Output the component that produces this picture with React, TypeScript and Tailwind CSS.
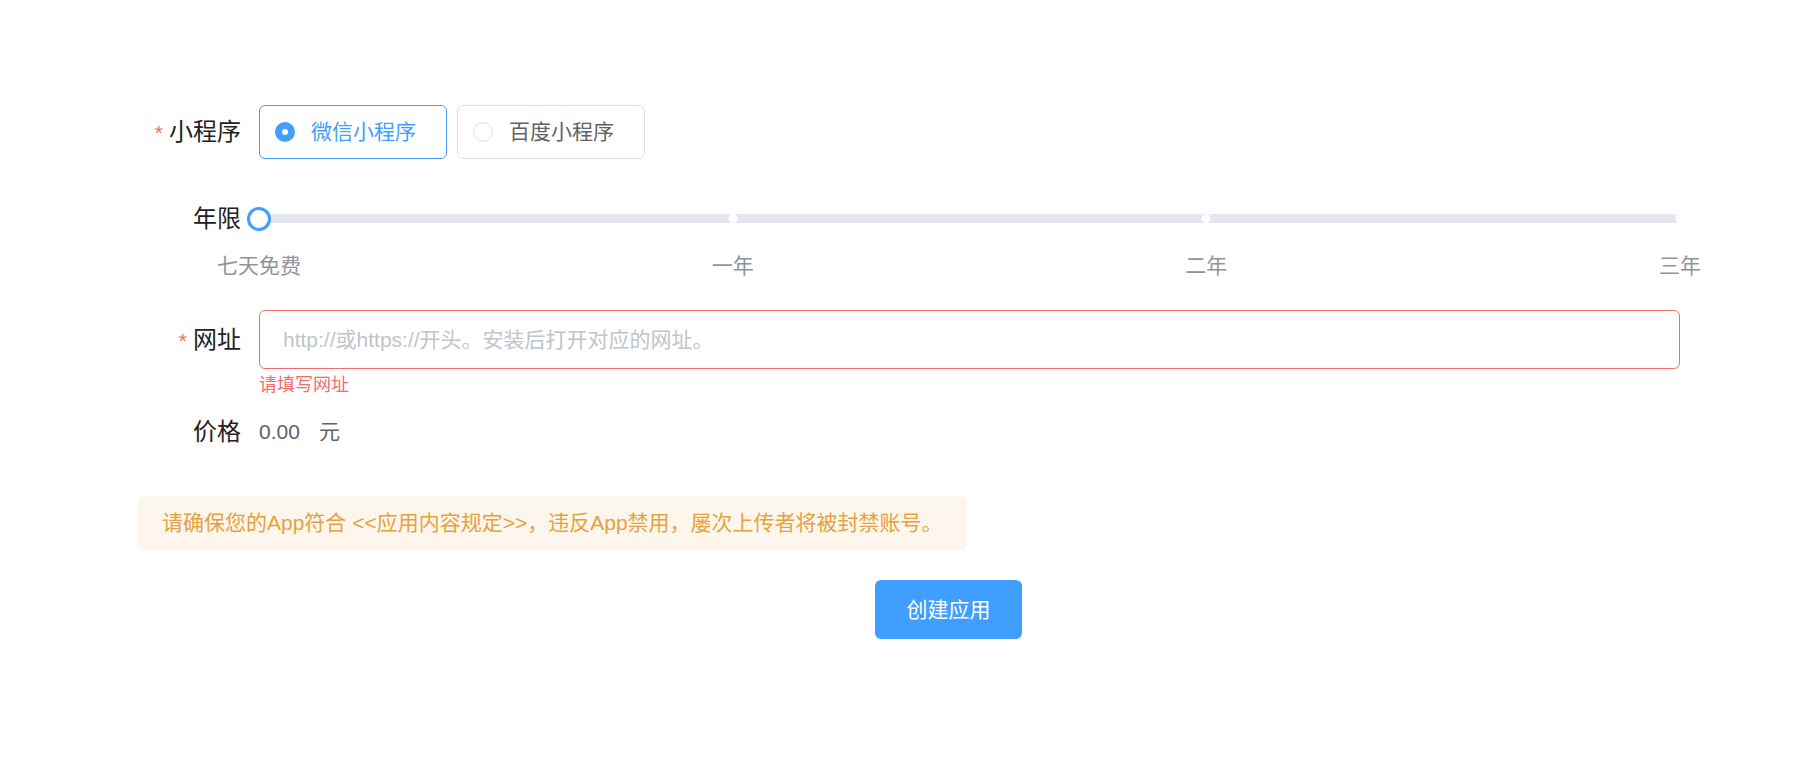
import React from "react";

const FONT = "font-['Liberation_Sans','Noto_Sans_CJK_SC',sans-serif]";

function Label({ text, required, h }: { text: string; required?: boolean; h: string }) {
  return (
    <div className={`w-[121px] shrink-0 pr-[18px] text-right text-[24px] text-[#222] ${h}`}>
      {required && <span className="mr-[6px] text-[21px] text-[#f56c6c]">*</span>}
      {text}
    </div>
  );
}

function Radio({ label, checked }: { label: string; checked?: boolean }) {
  return (
    <div
      className={`flex h-[54px] w-[188px] items-center rounded-[6px] border pl-[15px] ${
        checked ? "border-[#409eff]" : "border-[#dcdfe6]"
      }`}
    >
      {checked ? (
        <span className="flex h-[20px] w-[20px] items-center justify-center rounded-full bg-[#409eff]">
          <span className="h-[6px] w-[6px] rounded-full bg-white" />
        </span>
      ) : (
        <span className="h-[20px] w-[20px] rounded-full border border-[#dcdfe6] bg-white" />
      )}
      <span className={`ml-[16px] text-[21px] ${checked ? "text-[#409eff]" : "text-[#606266]"}`}>{label}</span>
    </div>
  );
}

const marks = [
  { pos: "left-0", text: "七天免费" },
  { pos: "left-1/3", text: "一年" },
  { pos: "left-2/3", text: "二年" },
  { pos: "left-full", text: "三年" },
];

function Slider() {
  return (
    <div className="relative h-[84px] flex-1">
      <div className="absolute left-0 right-0 top-[21px] h-[9px] rounded-[5px] bg-[#e4e7ed]" />
      {/* stops */}
      <span className="absolute left-1/3 top-[21px] h-[9px] w-[9px] -translate-x-1/2 rounded-full bg-white" />
      <span className="absolute left-2/3 top-[21px] h-[9px] w-[9px] -translate-x-1/2 rounded-full bg-white" />
      <span className="absolute left-full top-[21px] h-[9px] w-[9px] -translate-x-1/2 rounded-full bg-white" />
      {/* thumb */}
      <span className="absolute left-0 top-[14px] h-[24px] w-[24px] -translate-x-1/2 rounded-full border-[3px] border-[#409eff] bg-white" />
      {marks.map((m) => (
        <span
          key={m.text}
          className={`absolute ${m.pos} top-[62px] -translate-x-1/2 whitespace-nowrap text-[21px] leading-[21px] text-[#909399]`}
        >
          {m.text}
        </span>
      ))}
    </div>
  );
}

export default function App() {
  return (
    <div className={`min-h-screen bg-white ${FONT}`}>
      <div className="pl-[138px] pr-[126px] pt-[105px]">
        <div className="mb-[33px] flex">
          <Label text="小程序" required h="leading-[54px]" />
          <div className="flex gap-[10px]">
            <Radio label="微信小程序" checked />
            <Radio label="百度小程序" />
          </div>
        </div>

        <div className="mb-[33px] flex">
          <Label text="年限" h="leading-[51px]" />
          <Slider />
        </div>

        <div className="mb-[8px] flex">
          <Label text="网址" required h="leading-[59px]" />
          <div className="flex-1">
            <div className="flex h-[59px] items-center rounded-[6px] border border-[#f56c6c] px-[23px] text-[21px] text-[#c0c4cc]">
              http://或https://开头。安装后打开对应的网址。
            </div>
            <div className="mt-[7px] text-[18px] leading-[18px] text-[#f56c6c]">请填写网址</div>
          </div>
        </div>

        <div className="flex">
          <Label text="价格" h="leading-[60px]" />
          <div className="flex items-center text-[21px] text-[#606266]">
            <span>0.00</span>
            <span className="ml-[19px]">元</span>
          </div>
        </div>

        <div className="mt-[34px] inline-flex h-[54px] items-center rounded-[6px] bg-[#fdf6ec] px-[24px] text-[21px] text-[#e6a23c]">
          请确保您的App符合 &lt;&lt;应用内容规定&gt;&gt;，违反App禁用，屡次上传者将被封禁账号。
        </div>

        <div className="mt-[30px]">
          <button
            type="button"
            className="ml-[737px] h-[59px] w-[147px] rounded-[6px] bg-[#409eff] text-[21px] text-white"
          >
            创建应用
          </button>
        </div>
      </div>
    </div>
  );
}
